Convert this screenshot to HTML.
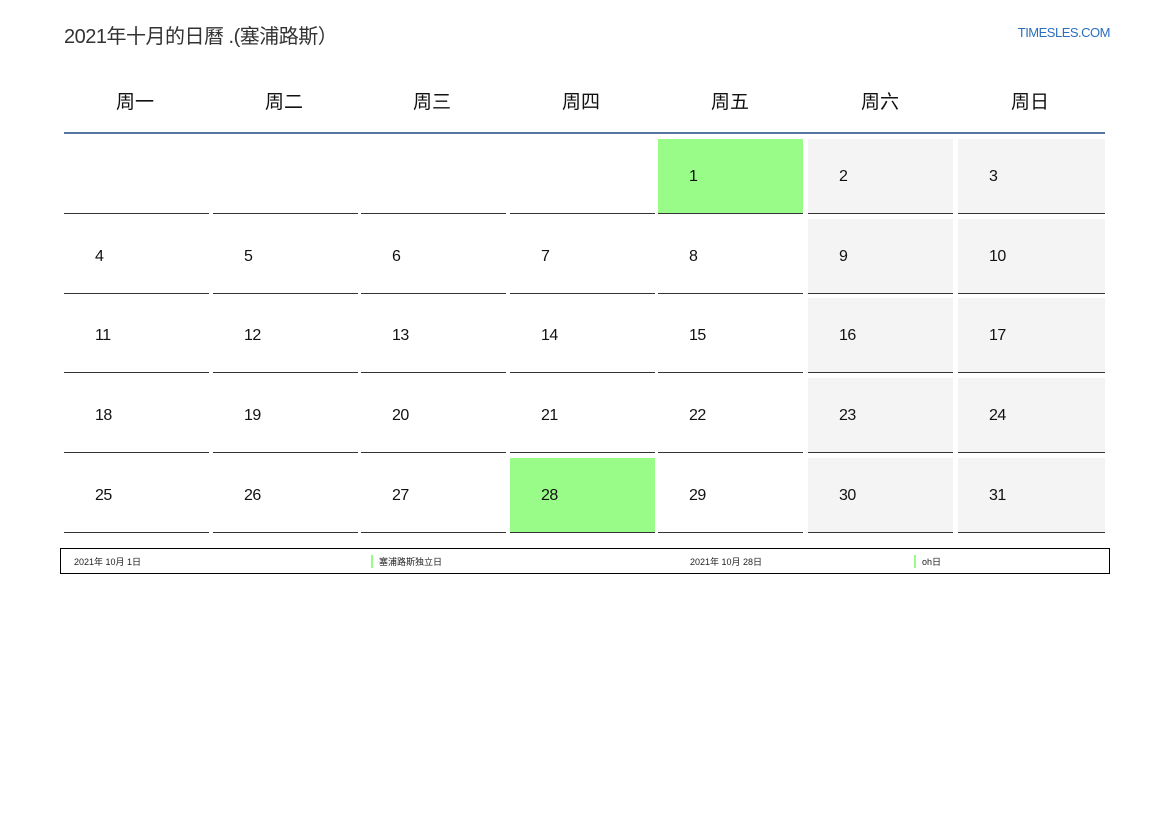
<!DOCTYPE html>
<html><head><meta charset="utf-8"><style>
body{margin:0;width:1169px;height:827px;background:#fff;position:relative;font-family:"Liberation Sans","Noto Sans CJK SC",sans-serif;overflow:hidden}
.t{position:absolute;left:64px;top:20px;font-size:20px;color:#333;letter-spacing:-0.5px}
.s{position:absolute;right:59px;top:25px;font-size:13px;color:#2a6fbd;letter-spacing:-0.5px}
.h{position:absolute;top:87px;width:146px;text-align:center;font-size:19px;color:#111}
.bl{position:absolute;left:64px;top:132px;width:1041px;height:2px;background:#5576a0}
.c{position:absolute;width:145px;height:75px;border-bottom:1px solid #333;box-sizing:border-box;font-size:16px;color:#111}
.c span{position:absolute;left:31px;top:29px;letter-spacing:-0.5px}
.w{background:#f4f4f4}.g{background:#99fb88}
.f{position:absolute;left:60px;top:548px;width:1050px;height:26px;border:1px solid #000;box-sizing:border-box;font-size:9px;color:#222}
.f div{position:absolute;top:6px}
.m{border-left:2px solid #99fb88;padding-left:6px}
</style></head><body>
<div class="t">2021年十月的日曆 .(塞浦路斯）</div>
<div class="s">TIMESLES.COM</div>
<div class="h" style="left:62px">周一</div><div class="h" style="left:211px">周二</div><div class="h" style="left:359px">周三</div><div class="h" style="left:508px">周四</div><div class="h" style="left:657px">周五</div><div class="h" style="left:807px">周六</div><div class="h" style="left:957px">周日</div>
<div class="bl"></div>
<div id="g"></div>
<script>
var xs=[64,213,361,510,658,808,958],ys=[139,219,298,378,458],h='';
for(var r=0;r<5;r++)for(var c=0;c<7;c++){var d=r*7+c-3;var cl='c';
if(d==1||d==28)cl+=' g';else if(c>=5&&d>=1)cl+=' w';
h+='<div class="'+cl+'" style="left:'+xs[c]+'px;top:'+ys[r]+'px;width:'+(c==6?147:145)+'px">'+(d>=1?'<span>'+d+'</span>':'')+'</div>';}
document.getElementById('g').innerHTML=h;
</script>
<div class="f"><div style="left:13px">2021年 10月 1日</div><div class="m" style="left:310px">塞浦路斯独立日</div><div style="left:629px">2021年 10月 28日</div><div class="m" style="left:853px">oh日</div></div>
</body></html>
